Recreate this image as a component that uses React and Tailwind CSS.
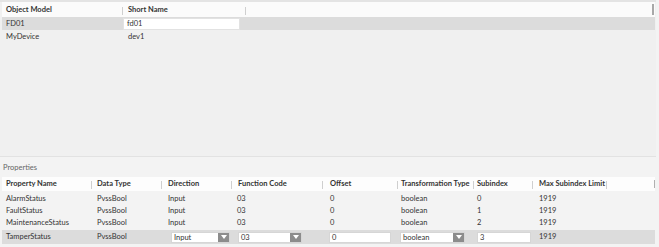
import React from "react";

const props = [
  { name: "AlarmStatus", type: "PvssBool", dir: "Input", fc: "03", off: "0", tt: "boolean", sub: "0", max: "1919" },
  { name: "FaultStatus", type: "PvssBool", dir: "Input", fc: "03", off: "0", tt: "boolean", sub: "1", max: "1919" },
  { name: "MaintenanceStatus", type: "PvssBool", dir: "Input", fc: "03", off: "0", tt: "boolean", sub: "2", max: "1919" },
];

function Sep() {
  return <span className="absolute right-0 top-[3px] h-[8px] w-px bg-[#cfcfcf]"></span>;
}

function HeadCell({ w, pl, children, sep = true }) {
  return (
    <div className={`relative shrink-0 ${w} ${pl} whitespace-nowrap overflow-hidden`}>
      {children}
      {sep && <Sep />}
    </div>
  );
}

function Combo({ w, value }) {
  return (
    <div className={`flex h-[11px] ${w} items-stretch border border-[#d6d6d6] bg-white`}>
      <span className="flex-1 pl-[2px] leading-[9px]">{value}</span>
      <span className="flex w-[11px] items-center justify-center bg-[#8c8c8c]">
        <svg width="6" height="4" viewBox="0 0 6 4">
          <path d="M0 0h6L3 4z" fill="#fff" />
        </svg>
      </span>
    </div>
  );
}

function Edit({ w, value }) {
  return (
    <div className={`h-[11px] ${w} border border-[#d6d6d6] bg-white pl-[2px] leading-[9px]`}>
      {value}
    </div>
  );
}

export default function App() {
  return (
    <div
      className="relative h-[247px] w-[659px] overflow-hidden bg-[#f3f3f3] text-[7.5px] text-[#333]"
      style={{ fontFamily: "Lato, 'Open Sans', sans-serif" }}
    >
      {/* object model panel */}
      <div className="h-[156px] w-[656px] border-t-2 border-[#e4e4e4] bg-[#f0f0f0] pl-[2px]">
        <div className="flex h-[15px] w-[653px] items-center bg-[#fbfbfb] font-bold">
          <HeadCell w="w-[121px]" pl="pl-[4px]">Object Model</HeadCell>
          <HeadCell w="w-[123px]" pl="pl-[5px]">Short Name</HeadCell>
          <div className="relative flex-1">
            <span className="absolute right-[1px] top-[-6px] h-[11px] w-[2px] bg-[#a8a8a8]"></span>
          </div>
        </div>
        <div className="flex h-[13px] w-[653px] items-center bg-[#dcdcdc]">
          <div className="w-[121px] pl-[4px]">FD01</div>
          <div className="h-[12px] w-[117px] border border-[#e2e2e2] bg-white pl-[3px] leading-[10px]">fd01</div>
        </div>
        <div className="flex h-[13px] w-[653px] items-center">
          <div className="w-[121px] pl-[4px]">MyDevice</div>
          <div className="pl-[5px]">dev1</div>
        </div>
      </div>
      <div className="h-px w-[656px] bg-[#e2e2e2]"></div>

      {/* properties */}
      <div className="pl-[3px] pt-[6px] text-[#666] leading-[10px]">Properties</div>
      <div className="mt-[4px] pl-[2px]">
        <div className="flex h-[14px] w-[653px] items-center bg-[#fdfdfd] font-bold">
          <HeadCell w="w-[90px]" pl="pl-[4px]">Property Name</HeadCell>
          <HeadCell w="w-[70px]" pl="pl-[5px]">Data Type</HeadCell>
          <HeadCell w="w-[70px]" pl="pl-[6px]">Direction</HeadCell>
          <HeadCell w="w-[91px]" pl="pl-[6px]">Function Code</HeadCell>
          <HeadCell w="w-[75px]" pl="pl-[7px]">Offset</HeadCell>
          <HeadCell w="w-[76px]" pl="pl-[3px]">Transformation Type</HeadCell>
          <HeadCell w="w-[59px]" pl="pl-[3px]">Subindex</HeadCell>
          <HeadCell w="w-[74px]" pl="pl-[6px]">Max Subindex Limit</HeadCell>
          <div className="relative flex-1 h-[14px]">
            <span className="absolute right-[0px] top-[3px] h-[8px] w-px bg-[#b0b0b0]"></span>
          </div>
        </div>
        <div className="pt-[2px]">
          {props.map((p) => (
            <div key={p.name} className="flex h-[12px] w-[653px] items-center whitespace-nowrap">
              <div className="w-[90px] pl-[4px]">{p.name}</div>
              <div className="w-[70px] pl-[5px]">{p.type}</div>
              <div className="w-[70px] pl-[6px]">{p.dir}</div>
              <div className="w-[91px] pl-[5px]">{p.fc}</div>
              <div className="w-[75px] pl-[7px]">{p.off}</div>
              <div className="w-[76px] pl-[3px]">{p.tt}</div>
              <div className="w-[59px] pl-[3px]">{p.sub}</div>
              <div className="w-[74px] pl-[6px]">{p.max}</div>
            </div>
          ))}
          <div className="mt-[1px] flex h-[14px] w-[653px] items-center whitespace-nowrap bg-[#dcdcdc]">
            <div className="w-[90px] pl-[4px]">TamperStatus</div>
            <div className="w-[70px] pl-[5px]">PvssBool</div>
            <div className="w-[70px] pl-[9px]">
              <Combo w="w-[59px]" value="Input" />
            </div>
            <div className="w-[91px] pl-[6px]">
              <Combo w="w-[64px]" value="03" />
            </div>
            <div className="w-[75px] pl-[6px]">
              <Edit w="w-[62px]" value="0" />
            </div>
            <div className="w-[76px] pl-[2px]">
              <Combo w="w-[65px]" value="boolean" />
            </div>
            <div className="w-[59px] pl-[3px]">
              <Edit w="w-[54px]" value="3" />
            </div>
            <div className="w-[74px] pl-[6px]">1919</div>
          </div>
        </div>
      </div>
    </div>
  );
}
